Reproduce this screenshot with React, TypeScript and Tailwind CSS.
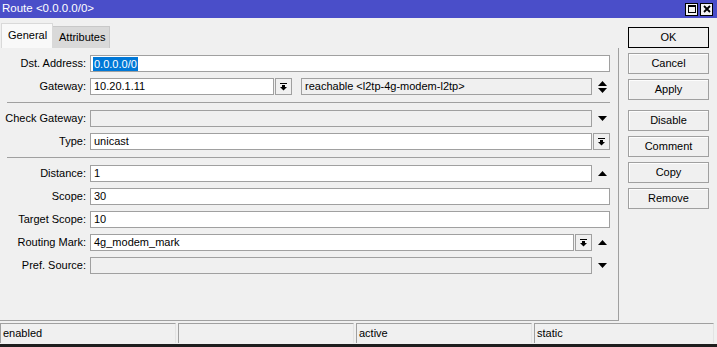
import React from "react";

function UpArrow() {
  return (
    <svg width="9" height="5" viewBox="0 0 9 5">
      <polygon points="0,5 9,5 4.5,0" fill="#000" />
    </svg>
  );
}

function DownArrow() {
  return (
    <svg width="9" height="5" viewBox="0 0 9 5">
      <polygon points="0,0 9,0 4.5,5" fill="#000" />
    </svg>
  );
}

function UpDownArrow() {
  return (
    <svg width="9" height="12" viewBox="0 0 9 12">
      <polygon points="0,5 9,5 4.5,0" fill="#000" />
      <polygon points="0,7 9,7 4.5,12" fill="#000" />
    </svg>
  );
}

function DropIcon() {
  return (
    <svg width="7" height="8" viewBox="0 0 7 8">
      <rect x="0" y="0" width="7" height="1" fill="#000" />
      <rect x="2" y="2" width="3" height="2" fill="#000" />
      <polygon points="0,4 7,4 3.5,7.5" fill="#000" />
    </svg>
  );
}

function Box({
  value,
  disabled,
  selected,
  className = "flex-1",
}: {
  value?: string;
  disabled?: boolean;
  selected?: boolean;
  className?: string;
}) {
  return (
    <div
      className={`${className} flex h-full items-center overflow-hidden whitespace-nowrap border border-[#a0a0a0] pl-[2px] ${
        disabled ? "bg-[#f0f0f0]" : "bg-white"
      }`}
    >
      {selected ? (
        <span className="bg-[#0078d7] px-px leading-[14px] text-white">{value}</span>
      ) : (
        <span className="pl-px">{value}</span>
      )}
    </div>
  );
}

function DropBtn() {
  return (
    <div className="ml-px flex h-full w-[17px] shrink-0 items-center justify-center border border-[#a0a0a0] bg-[#f0f0f0]">
      <DropIcon />
    </div>
  );
}

function ArrowCell({ children }: { children: React.ReactNode }) {
  return <div className="flex h-full w-[18px] shrink-0 items-center justify-center pl-[2px]">{children}</div>;
}

function Row({ label, children }: { label: string; children: React.ReactNode }) {
  return (
    <div className="flex h-[17px] items-center">
      <span className="w-[86px] shrink-0 text-right">{label}</span>
      <div className="ml-[4px] flex h-full w-[520px]">{children}</div>
    </div>
  );
}

function Separator() {
  return <div className="my-px ml-[7px] h-px w-[603px] bg-[#a0a0a0]" />;
}

function Btn({ label, primary }: { label: string; primary?: boolean }) {
  return (
    <div
      className={`flex h-[21px] w-[81px] items-center justify-center border bg-[#f0f0f0] ${
        primary ? "border-black" : "border-[#a0a0a0] shadow-[inset_1px_1px_0_#fdfdfd]"
      }`}
    >
      {label}
    </div>
  );
}

function StatusCell({ text, className = "w-[176px]" }: { text: string; className?: string }) {
  return (
    <div className={`${className} flex h-full items-center border-t border-l border-r border-[#a0a0a0] border-r-[#e3e3e3] pl-[2px]`}>
      {text}
    </div>
  );
}

export default function App() {
  return (
    <div className="flex h-[347px] w-[717px] flex-col overflow-hidden bg-[#f0f0f0] font-['Liberation_Sans',Arial,sans-serif] text-[11px] text-black">
      <div className="flex h-[18px] shrink-0 items-center justify-between bg-[#4a4ec9] pl-[2px] pr-[4px]">
        <span className="text-[11.5px] text-white">Route &lt;0.0.0.0/0&gt;</span>
        <div className="flex gap-[2px]">
          <div className="flex h-[13px] w-[13px] items-center justify-center border border-black bg-[#f4f4f4]">
            <div className="h-[8px] w-[8px] border border-t-2 border-black" />
          </div>
          <div className="flex h-[13px] w-[13px] items-center justify-center border border-black bg-[#f4f4f4]">
            <svg width="8" height="8" viewBox="0 0 8 8">
              <path d="M1 1 L7 7 M7 1 L1 7" stroke="#000" strokeWidth="1.8" />
            </svg>
          </div>
        </div>
      </div>

      <div className="flex flex-1">
        <div className="flex w-[619px] flex-col pt-[5px]">
          <div className="flex h-[25px] items-end pl-px">
            <div className="flex h-[25px] w-[52px] items-center border border-b-0 border-[#d9d9d9] bg-[#f9f9f9] pl-[6px] pb-[2px]">
              General
            </div>
            <div className="flex h-[22px] w-[57px] items-center border border-b-0 border-l-0 border-[#c8c8c8] bg-[#d9d9d9] pl-[6px]">
              Attributes
            </div>
          </div>
          <div className="flex flex-1 flex-col gap-[6px] border-r border-b border-[#a0a0a0] pt-[7px]">
            <Row label="Dst. Address:">
              <Box value="0.0.0.0/0" selected />
            </Row>
            <Row label="Gateway:">
              <Box value="10.20.1.11" className="w-[184px]" />
              <DropBtn />
              <div className="ml-[9px] flex flex-1">
                <Box value="reachable <l2tp-4g-modem-l2tp>" disabled />
              </div>
              <ArrowCell>
                <UpDownArrow />
              </ArrowCell>
            </Row>
            <Separator />
            <Row label="Check Gateway:">
              <Box disabled />
              <ArrowCell>
                <DownArrow />
              </ArrowCell>
            </Row>
            <Row label="Type:">
              <Box value="unicast" />
              <DropBtn />
            </Row>
            <Separator />
            <Row label="Distance:">
              <Box value="1" />
              <ArrowCell>
                <UpArrow />
              </ArrowCell>
            </Row>
            <Row label="Scope:">
              <Box value="30" />
            </Row>
            <Row label="Target Scope:">
              <Box value="10" />
            </Row>
            <Row label="Routing Mark:">
              <Box value="4g_modem_mark" />
              <DropBtn />
              <ArrowCell>
                <UpArrow />
              </ArrowCell>
            </Row>
            <Row label="Pref. Source:">
              <Box disabled />
              <ArrowCell>
                <DownArrow />
              </ArrowCell>
            </Row>
          </div>
        </div>

        <div className="flex flex-col gap-[5px] pl-[9px] pt-[9px]">
          <Btn label="OK" primary />
          <Btn label="Cancel" />
          <Btn label="Apply" />
          <div className="mt-[5px] flex flex-col gap-[5px]">
            <Btn label="Disable" />
            <Btn label="Comment" />
            <Btn label="Copy" />
            <Btn label="Remove" />
          </div>
        </div>
      </div>

      <div className="flex h-[26px] shrink-0 flex-col pt-[2px]">
        <div className="flex h-[20px] gap-[2px] pr-[3px]">
          <StatusCell text="enabled" />
          <StatusCell text="" />
          <StatusCell text="active" />
          <StatusCell text="static" className="flex-1" />
        </div>
        <div className="h-px" />
        <div className="h-[3px] bg-[#1e1e1e]" />
      </div>
    </div>
  );
}
